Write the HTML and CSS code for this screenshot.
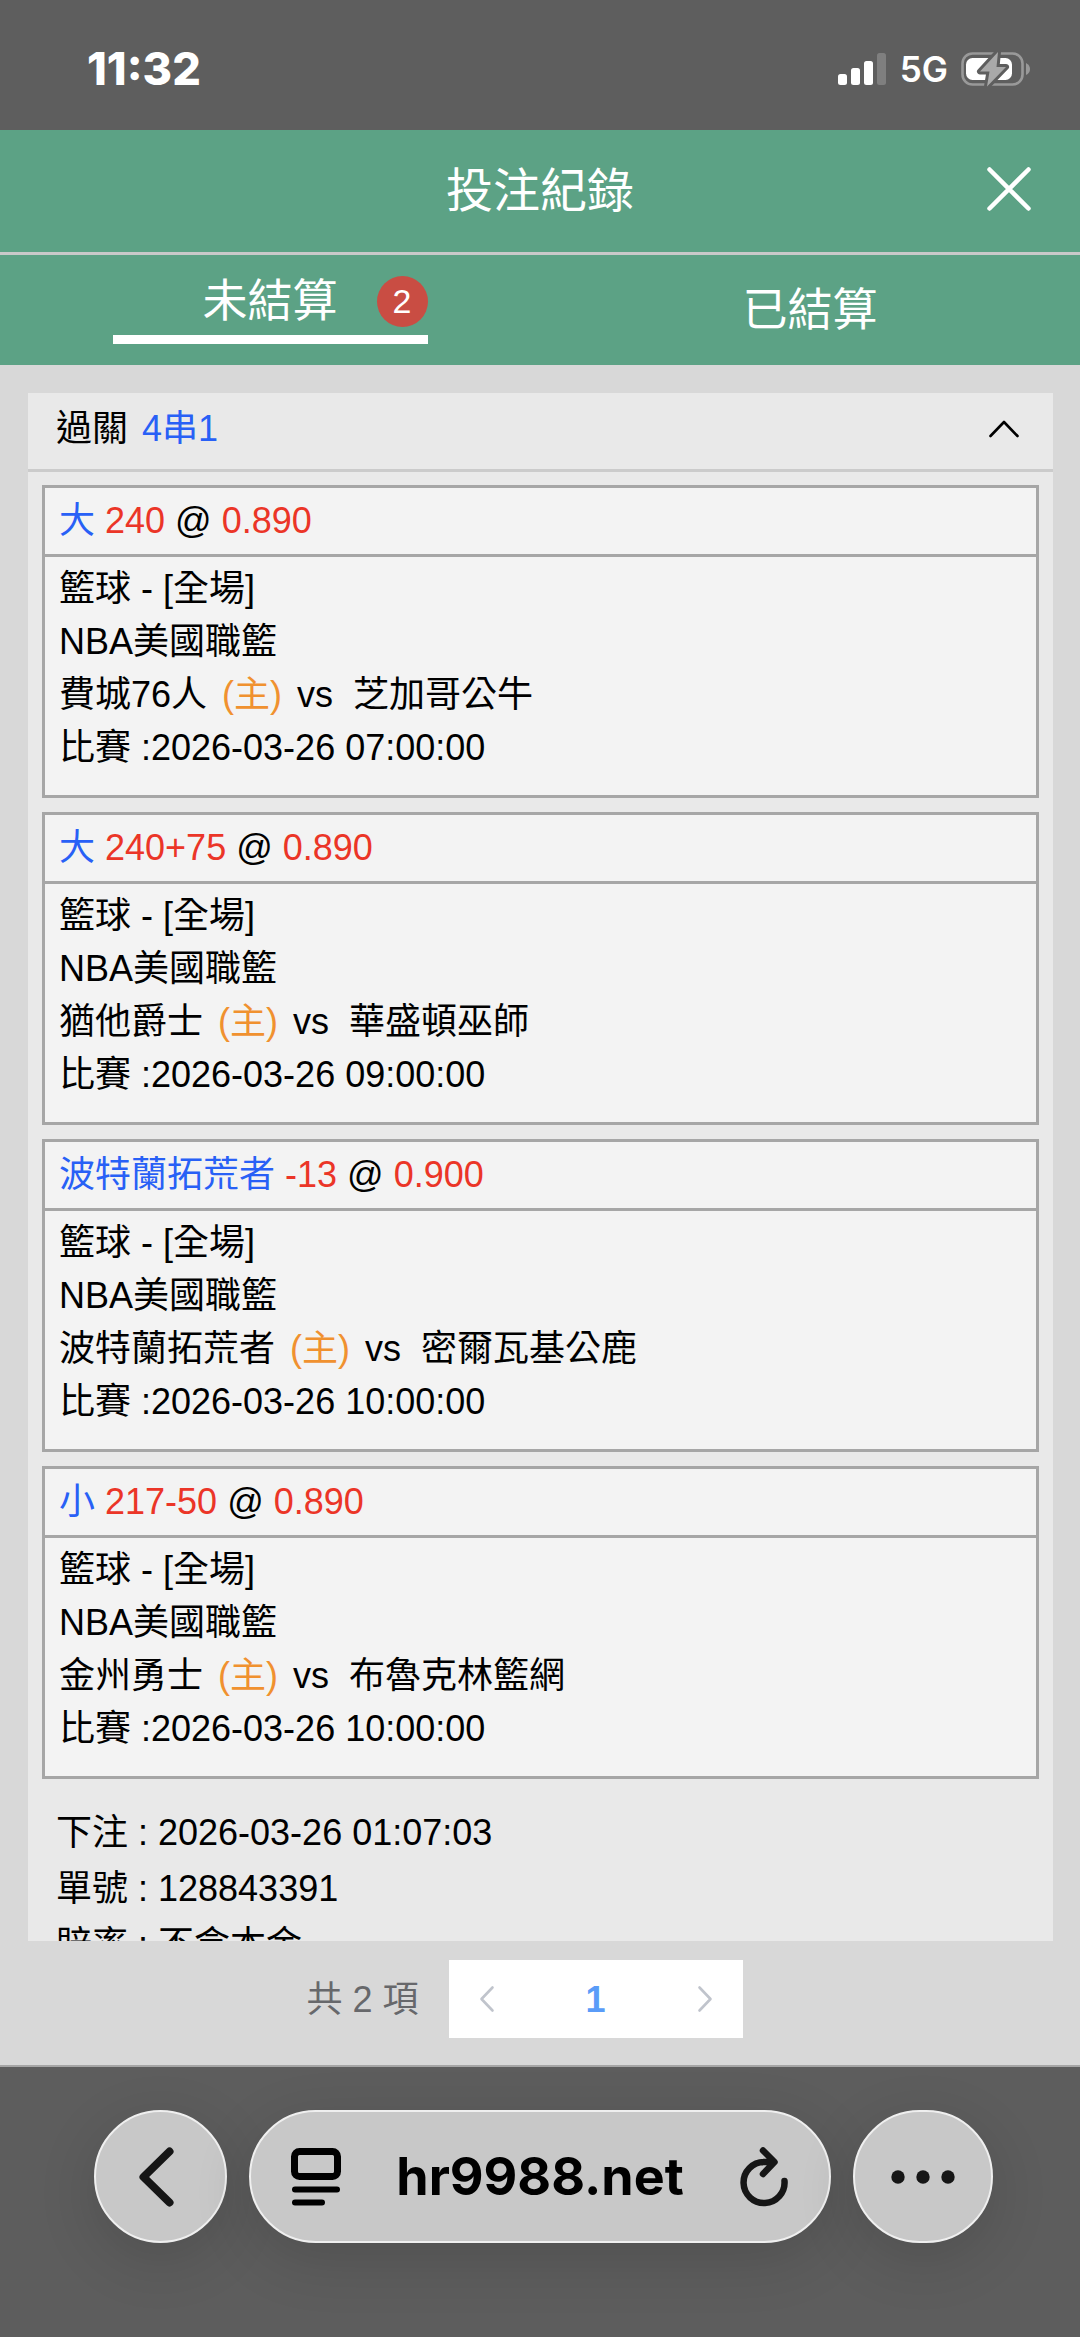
FILE: index.html
```html
<!DOCTYPE html>
<html lang="zh-TW">
<head>
<meta charset="utf-8">
<meta name="viewport" content="width=device-width, initial-scale=1">
<title>投注紀錄</title>
<link rel="stylesheet" href="styles.css">
</head>
<body>
<div class="screen">
  <div class="status">
    <span class="clock">11:32</span>
    <div class="status-icons">
      <svg class="signal" width="49" height="34" viewBox="0 0 49 34" aria-hidden="true">
        <g fill="#fff"><rect y="22" width="9" height="11" rx="2.5"/><rect x="13" y="16" width="9" height="17" rx="2.5"/><rect x="26" y="9" width="9" height="24" rx="2.5"/></g>
        <rect x="39" y="1" width="9" height="32" rx="2.5" fill="#7f7f7f"/>
      </svg>
      <span class="network">5G</span>
      <svg width="70" height="38" viewBox="0 0 70 38" aria-hidden="true">
        <rect x="1.5" y="3.5" width="60" height="31" rx="10" fill="none" stroke="#999" stroke-width="2.6"/>
        <path d="M65 13q4 2 4 6t-4 6z" fill="#999"/>
        <rect x="5" y="8" width="46" height="22" rx="6.5" fill="#fff"/>
        <path d="M37 2 19 21.500h9.500L26 36.500 45 17h-9.500z" fill="#a9a9a9" stroke="#5e5e5e" stroke-width="6" stroke-linejoin="round" paint-order="stroke"/>
      </svg>
    </div>
  </div>

  <header class="titlebar">
    <h1>投注紀錄</h1>
    <button class="close" type="button" aria-label="關閉">
      <svg width="44" height="44" viewBox="0 0 44 44"><path d="M2.500 2.500 41.500 41.500M41.500 2.500 2.500 41.500" fill="none" stroke="#fff" stroke-width="4.500" stroke-linecap="round"/></svg>
    </button>
  </header>

  <nav class="tabs">
    <button class="tab" type="button"><span class="tab-label active"><span class="tab-text">未結算</span><span class="badge">2</span></span></button>
    <button class="tab" type="button">已結算</button>
  </nav>

  <main class="records">
    <section class="record">
      <button class="record-head" type="button">
        <span>過關 <span class="blue parlay">4串1</span></span>
        <svg width="30" height="18" viewBox="0 0 30 18" aria-hidden="true"><path d="M1.500 16 15 2l13.500 14" fill="none" stroke="#000" stroke-width="2.600" stroke-linecap="round" stroke-linejoin="round"/></svg>
      </button>
      <div class="legs">
        <article class="leg">
          <h2><span class="blue">大</span> <span class="red">240</span> @ <span class="red">0.890</span></h2>
          <div class="leg-body">
            <p>籃球 - [全場]</p>
            <p>NBA美國職籃</p>
            <p>費城76人 <span class="home">(主)</span> vs&nbsp; 芝加哥公牛</p>
            <p>比賽 :2026-03-26 07:00:00</p>
          </div>
        </article>
        <article class="leg">
          <h2><span class="blue">大</span> <span class="red">240+75</span> @ <span class="red">0.890</span></h2>
          <div class="leg-body">
            <p>籃球 - [全場]</p>
            <p>NBA美國職籃</p>
            <p>猶他爵士 <span class="home">(主)</span> vs&nbsp; 華盛頓巫師</p>
            <p>比賽 :2026-03-26 09:00:00</p>
          </div>
        </article>
        <article class="leg">
          <h2><span class="blue">波特蘭拓荒者</span> <span class="red">-13</span> @ <span class="red">0.900</span></h2>
          <div class="leg-body">
            <p>籃球 - [全場]</p>
            <p>NBA美國職籃</p>
            <p>波特蘭拓荒者 <span class="home">(主)</span> vs&nbsp; 密爾瓦基公鹿</p>
            <p>比賽 :2026-03-26 10:00:00</p>
          </div>
        </article>
        <article class="leg">
          <h2><span class="blue">小</span> <span class="red">217-50</span> @ <span class="red">0.890</span></h2>
          <div class="leg-body">
            <p>籃球 - [全場]</p>
            <p>NBA美國職籃</p>
            <p>金州勇士 <span class="home">(主)</span> vs&nbsp; 布魯克林籃網</p>
            <p>比賽 :2026-03-26 10:00:00</p>
          </div>
        </article>
      </div>
      <div class="summary">
        <p>下注 : 2026-03-26 01:07:03</p>
        <p>單號 : 128843391</p>
        <p>賠率 : 不含本金</p>
      </div>
    </section>
  </main>

  <div class="pager">
    <span>共 2 項</span>
    <div class="pager-box">
      <button type="button" aria-label="上一頁"><svg width="16" height="28" viewBox="0 0 16 28"><path d="M13.500 2.500 2.500 14l11 11.500" fill="none" stroke="#c0c4cc" stroke-width="2.600" stroke-linecap="round" stroke-linejoin="round"/></svg></button>
      <button class="current" type="button">1</button>
      <button type="button" aria-label="下一頁"><svg width="16" height="28" viewBox="0 0 16 28"><path d="M2.500 2.500 13.500 14l-11 11.500" fill="none" stroke="#c0c4cc" stroke-width="2.600" stroke-linecap="round" stroke-linejoin="round"/></svg></button>
    </div>
  </div>

  <footer class="browser">
    <button class="glass back" type="button" aria-label="返回">
      <svg width="36" height="60" viewBox="0 0 36 60"><path d="M31.500 4.500 5.500 30l26 25.500" fill="none" stroke="#161616" stroke-width="8" stroke-linecap="round" stroke-linejoin="round"/></svg>
    </button>
    <div class="glass address">
      <svg width="50" height="58" viewBox="0 0 50 58" aria-hidden="true"><rect x="3.500" y="3.500" width="43" height="25" rx="5" fill="none" stroke="#000" stroke-width="7"/><path d="M4 41.500h42M4 54.500h27" stroke="#000" stroke-width="6" stroke-linecap="round"/></svg>
      <span class="url">hr9988.net</span>
      <button type="button" aria-label="重新載入"><svg width="50" height="60" viewBox="0 0 50 60"><path d="M24 3.500 35.500 15 24 27M34 15H25A20.500 20.500 0 1 0 45.500 34" fill="none" stroke="#161616" stroke-width="6.500" stroke-linecap="round" stroke-linejoin="round"/></svg></button>
    </div>
    <button class="glass more" type="button" aria-label="更多">
      <svg width="64" height="14" viewBox="0 0 64 14"><g fill="#161616"><circle cx="7" cy="7" r="6.700"/><circle cx="32" cy="7" r="6.700"/><circle cx="57" cy="7" r="6.700"/></g></svg>
    </button>
  </footer>
</div>
</body>
</html>
```
FILE: styles.css
```css
* { box-sizing: border-box; margin: 0; padding: 0; }
body {
  font: 36px/53px "Liberation Sans", "Noto Sans CJK TC", sans-serif;
  color: #000;
  background: #d8d8d8;
}
button { font: inherit; color: inherit; background: none; border: 0; cursor: pointer; }
svg { display: block; flex: none; }
h1, h2 { font-weight: 400; }

.screen { display: flex; flex-direction: column; height: 100vh; }

.status {
  display: flex; align-items: center; justify-content: space-between;
  padding: 41px 49px 33px 87px;
  background: #5e5e5e; color: #fff;
  font-family: Inter, "Liberation Sans", sans-serif;
  line-height: 56px;
}
.clock { font-size: 45px; font-weight: 800; }
.status-icons { display: flex; align-items: center; }
.network { font-size: 35px; font-weight: 600; margin: 0 13px; }

.titlebar {
  display: grid; grid-template-columns: 1fr auto 1fr; align-items: center;
  padding: 25px 49px;
  background: #5ca285; color: #fff;
  border-bottom: 3px solid #c9c9c9;
}
.titlebar h1 { grid-column: 2; font-size: 47px; line-height: 72px; }
.close { justify-self: end; padding-bottom: 4px; }

.tabs { display: flex; background: #5ca285; }
.tab {
  flex: 1; display: flex; align-items: center; justify-content: center;
  height: 110px; color: #fff; font-size: 45px; line-height: 51px;
}
.tab-label {
  display: grid; grid-template-columns: 1fr auto 1fr; align-items: center;
  width: 315px;
}
.tab-label.active { padding-bottom: 8px; border-bottom: 9px solid #fff; }
.tab-text { grid-column: 2; }
.badge {
  justify-self: end; width: 51px; border-radius: 50%;
  background: #c94d43; font-size: 34px; text-align: center;
}

.records { flex: 1; min-height: 0; overflow: hidden; margin: 28px 27px 0 28px; }
.record { background: #e9e9e9; }
.record-head {
  display: flex; align-items: center; justify-content: space-between;
  width: 100%; padding: 9px 34px 14px 28px; text-align: left;
  border-bottom: 3px solid #cbcbcb;
}
.legs { display: flex; flex-direction: column; gap: 14px; padding: 13px 14px; }
.leg { border: 3px solid #a6a6a6; background: #f3f3f3; }
.leg h2 { font-size: 36px; line-height: 53px; padding: 6px 14px 7px; border-bottom: 3px solid #a6a6a6; }
.leg-body { padding: 5px 14px 21px; }
.blue { color: #2860f6; }
.red { color: #eb3527; }
.home { color: #f0912f; padding: 0 5px; }
.parlay { padding-left: 4px; }
.summary { padding: 13px 28px; line-height: 56px; }

.pager {
  display: flex; align-items: center; justify-content: center; gap: 30px;
  padding: 19px 31px 27px 0; color: #67686b;
}
.pager-box { display: flex; background: #fff; }
.pager-box button {
  display: flex; align-items: center; justify-content: center;
  width: 76px; height: 78px;
}
.pager-box .current { width: 142px; color: #5a9cf8; font-weight: 700; }

.browser {
  display: flex; gap: 22px;
  padding: 43px 87px 94px 94px;
  background: #5d5d5d; border-top: 2px solid #a5a5a5;
}
.glass {
  display: flex; align-items: center; justify-content: center;
  height: 133px; border: 2px solid #efefef; border-radius: 67px;
  background: #c8c8c8; box-shadow: 0 16px 60px rgba(0, 0, 0, .14);
}
.back { width: 133px; padding-right: 10px; }
.more { width: 140px; }
.address { flex: 1; justify-content: space-between; padding: 0 40px; }
.url { font: 700 52px/60px Inter, "Liberation Sans", sans-serif; }
```
